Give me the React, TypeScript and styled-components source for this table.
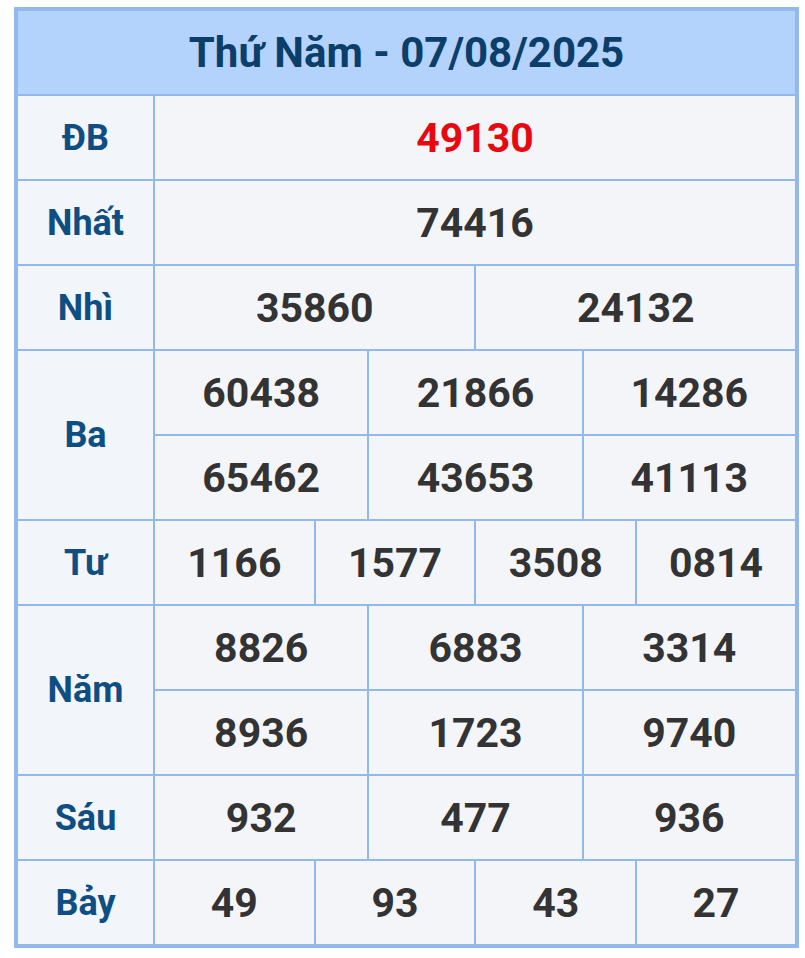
import React from 'react';
import styled, { createGlobalStyle } from 'styled-components';

const GlobalStyle = createGlobalStyle`
  html, body {
    margin: 0;
    padding: 0;
    background: #ffffff;
  }
  body {
    font-family: Roboto, "Noto Sans", Arial, sans-serif;
  }
`;

const Page = styled.div`
  padding: 7px 6px 0 14px;
`;

const Table = styled.table`
  width: 785px;
  border-collapse: collapse;
  table-layout: fixed;
  border: 4px solid #92b9ea;
  font-family: Roboto, "Noto Sans", Arial, sans-serif;
  font-weight: 700;
`;

const HeaderCell = styled.th`
  height: 83px;
  padding: 0;
  background: #b3d2fc;
  color: #0b3e69;
  font-size: 42px;
  font-weight: 700;
  text-align: center;
  vertical-align: middle;
  border: 2px solid #92b9ea;
`;

const Label = styled.td`
  height: 83px;
  padding: 0;
  background: #f2f5fa;
  color: #0f4e82;
  font-size: 36px;
  text-align: center;
  vertical-align: middle;
  border: 2px solid #92b9ea;
`;

const Num = styled.td<{ $special?: boolean }>`
  height: 83px;
  padding: 0;
  background: #f3f5f9;
  color: ${(p) => (p.$special ? '#e8080f' : '#333333')};
  font-size: 41px;
  text-align: center;
  vertical-align: middle;
  border: 2px solid #92b9ea;
`;

type Prize = {
  label: string;
  rows: string[][];
  special?: boolean;
};

const prizes: Prize[] = [
  { label: 'ĐB', rows: [['49130']], special: true },
  { label: 'Nhất', rows: [['74416']] },
  { label: 'Nhì', rows: [['35860', '24132']] },
  { label: 'Ba', rows: [['60438', '21866', '14286'], ['65462', '43653', '41113']] },
  { label: 'Tư', rows: [['1166', '1577', '3508', '0814']] },
  { label: 'Năm', rows: [['8826', '6883', '3314'], ['8936', '1723', '9740']] },
  { label: 'Sáu', rows: [['932', '477', '936']] },
  { label: 'Bảy', rows: [['49', '93', '43', '27']] },
];

const App = () => {
  return (
    <Page>
      <GlobalStyle />
      <Table>
        <colgroup>
          <col style={{ width: 138 }} />
          {Array.from({ length: 12 }).map((_, i) => (
            <col key={i} />
          ))}
        </colgroup>
        <thead>
          <tr>
            <HeaderCell colSpan={13}>Thứ Năm - 07/08/2025</HeaderCell>
          </tr>
        </thead>
        <tbody>
          {prizes.map((prize) =>
            prize.rows.map((row, ri) => (
              <tr key={prize.label + ri}>
                {ri === 0 && <Label rowSpan={prize.rows.length}>{prize.label}</Label>}
                {row.map((n, ni) => (
                  <Num key={ni} colSpan={12 / row.length} $special={prize.special}>
                    {n}
                  </Num>
                ))}
              </tr>
            ))
          )}
        </tbody>
      </Table>
    </Page>
  );
};

export default App;
